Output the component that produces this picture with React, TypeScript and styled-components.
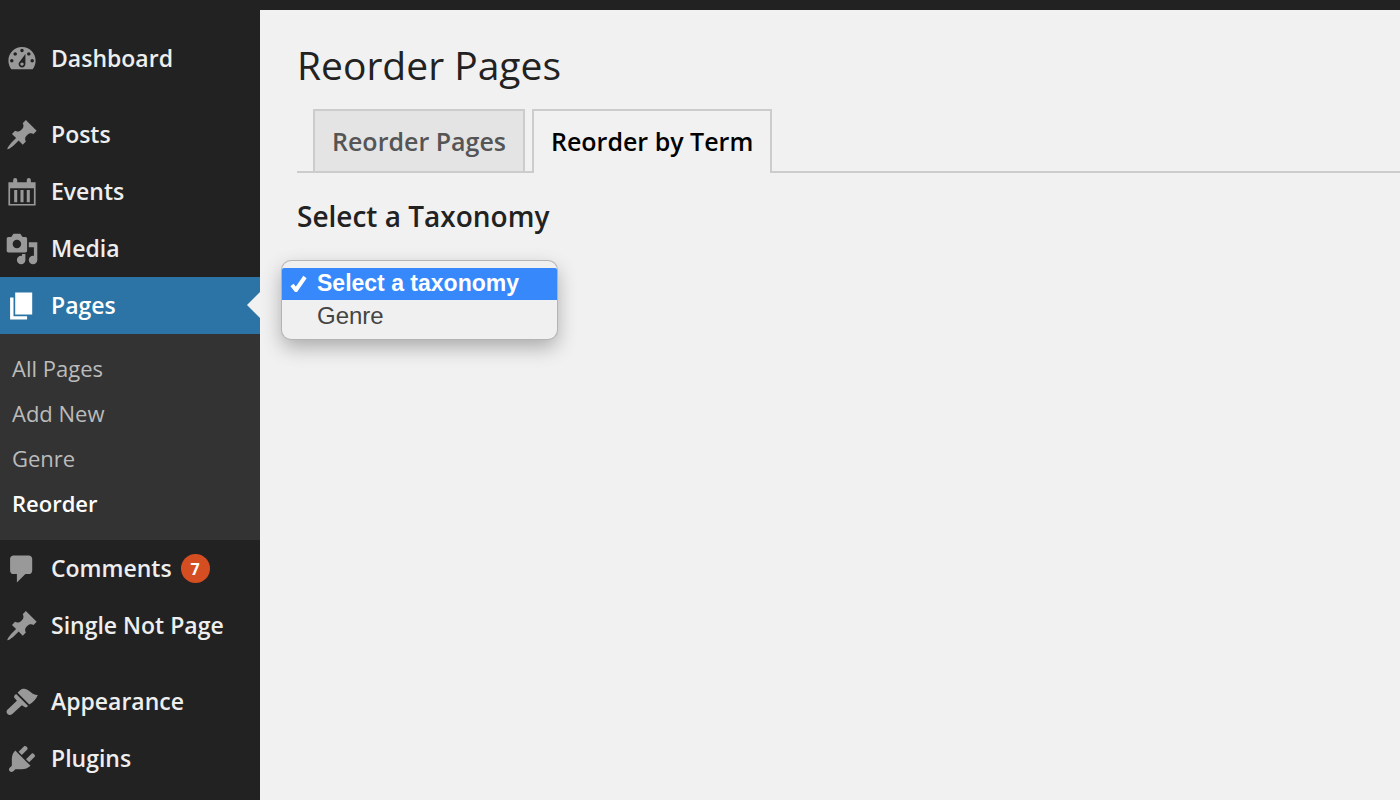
import React, { useState } from "react";
import styled, { createGlobalStyle } from "styled-components";

const GlobalStyle = createGlobalStyle`
  *, *::before, *::after { box-sizing: border-box; }
  html, body, #root { height: 100%; }
  body {
    margin: 0;
    overflow: hidden;
    background: #f1f1f1;
    color: #222;
    font-family: "Open Sans", "Noto Sans", sans-serif;
  }
  h1, h2, ul { margin: 0; padding: 0; }
`;

const Page = styled.div`
  display: flex;
  flex-direction: column;
  min-height: 100%;
`;

const AdminBar = styled.header`
  flex: none;
  height: 10px;
  background: #222;
`;

const Body = styled.div`
  display: flex;
  flex: 1;
`;

const Sidebar = styled.nav`
  flex: none;
  width: 260px;
  padding: 20px 0 12px;
  background: #222;
`;

const Menu = styled.ul`
  list-style: none;
  & + & { margin-top: 19px; }
`;

const MenuLink = styled.a<{ $current?: boolean }>`
  position: relative;
  display: flex;
  align-items: center;
  gap: 12px;
  height: 57px;
  padding-left: 5px;
  color: ${(p) => (p.$current ? "#fff" : "#eee")};
  background: ${(p) => (p.$current ? "#2b74a5" : "transparent")};
  font-size: 23px;
  font-weight: 600;
  text-decoration: none;
  white-space: nowrap;

  svg { flex: none; fill: ${(p) => (p.$current ? "#fff" : "#999")}; }

  &::after {
    content: "";
    display: ${(p) => (p.$current ? "block" : "none")};
    position: absolute;
    right: 0;
    top: 15px;
    border: 13px solid transparent;
    border-left: 0;
    border-right-color: #f1f1f1;
  }
`;

const MenuLabel = styled.span`
  padding-bottom: 2px;
`;

const Badge = styled.span`
  display: grid;
  place-items: center;
  width: 29px;
  height: 29px;
  margin-left: -3px;
  border-radius: 50%;
  background: #d54e21;
  color: #fff;
  font-size: 16px;
  font-weight: 700;
`;

const SubMenu = styled.ul`
  list-style: none;
  height: 206px;
  background: #333;
  && { padding-top: 12px; }
`;

const SubLink = styled.a<{ $current?: boolean }>`
  display: flex;
  align-items: center;
  height: 45px;
  padding: 0 0 2px 12px;
  color: ${(p) => (p.$current ? "#fff" : "#bbb")};
  font-size: 22px;
  font-weight: ${(p) => (p.$current ? 600 : 400)};
  text-decoration: none;
`;

const Main = styled.main`
  flex: 1;
  min-width: 0;
  padding: 31px 0 0 37px;
`;

const Title = styled.h1`
  font-size: 39px;
  font-weight: 400;
  line-height: 48px;
`;

const Tabs = styled.div`
  display: flex;
  gap: 7px;
  margin-top: 20px;
  padding-left: 16px;
  border-bottom: 2px solid #ccc;
`;

const Tab = styled.a<{ $current?: boolean }>`
  height: ${(p) => (p.$current ? 64 : 62)}px;
  margin-bottom: ${(p) => (p.$current ? -2 : 0)}px;
  padding: 0 17px;
  border: 2px solid #ccc;
  border-bottom: 0;
  background: ${(p) => (p.$current ? "#f1f1f1" : "#e4e4e4")};
  color: ${(p) => (p.$current ? "#000" : "#555")};
  font-size: 25px;
  font-weight: 600;
  line-height: 60px;
  text-decoration: none;
  white-space: nowrap;
`;

const SectionTitle = styled.h2`
  margin-top: 23px;
  font-size: 28px;
  font-weight: 600;
  line-height: 40px;
`;

const Popup = styled.div`
  position: relative;
  width: 275px;
  margin: 25px 0 0 -15px;
  padding: 7px 0;
  border-radius: 9px;
  background: #f0f0f0;
  box-shadow: 0 0 0 1px #b4b4b4, 0 8px 20px rgba(0, 0, 0, 0.3);
`;

const TaxonomySelect = styled.select`
  display: block;
  width: 100%;
  height: 64px;
  padding: 0;
  border: 0;
  outline: 0;
  overflow: hidden;
  background: transparent;
  font-family: "Liberation Sans", Arial, sans-serif;
  font-size: 24px;

  option {
    height: 32px;
    min-height: 32px;
    padding: 2px 0 0 35px;
    line-height: 30px;
    -webkit-text-fill-color: #444;
  }
  option:checked {
    background-image: linear-gradient(#3789fb, #3789fb);
    -webkit-text-fill-color: #fff;
    font-size: 23px;
    font-weight: 700;
  }
`;

const Check = styled.svg<{ $row: number }>`
  position: absolute;
  left: 8px;
  top: ${(p) => 14 + p.$row * 32}px;
  pointer-events: none;
`;

const icons: Record<string, string> = {
  dashboard:
    "M3.76 16h12.48c1.1-1.37 1.76-3.11 1.76-5 0-4.42-3.58-8-8-8s-8 3.58-8 8c0 1.89.66 3.63 1.76 5zM10 4c.55 0 1 .45 1 1s-.45 1-1 1-1-.45-1-1 .45-1 1-1zM6 6c.55 0 1 .45 1 1s-.45 1-1 1-1-.45-1-1 .45-1 1-1zm8 0c.55 0 1 .45 1 1s-.45 1-1 1-1-.45-1-1 .45-1 1-1zm-5.37 5.55L12 7v6c0 1.1-.9 2-2 2s-2-.9-2-2c0-.57.24-1.08.63-1.45zM4 10c.55 0 1 .45 1 1s-.45 1-1 1-1-.45-1-1 .45-1 1-1zm12 0c.55 0 1 .45 1 1s-.45 1-1 1-1-.45-1-1 .45-1 1-1zm-5 3c0-.55-.45-1-1-1s-1 .45-1 1 .45 1 1 1 1-.45 1-1z",
  pin: "M10.44 3.02l1.82-1.82 6.36 6.35-1.83 1.82c-1.05-.68-2.48-.57-3.41.36l-.75.75c-.92.93-1.04 2.35-.35 3.41l-1.83 1.82-2.41-2.41-2.8 2.79c-.42.42-3.38 2.71-3.8 2.29s1.86-3.39 2.28-3.81l2.79-2.79L4.1 9.36l1.83-1.82c1.05.69 2.48.57 3.4-.36l.75-.75c.93-.92 1.05-2.35.36-3.41z",
  events:
    "M2 4.2h2.8V3a1.2 1.2 0 0 1 2.4 0v1.2h5.6V3a1.2 1.2 0 0 1 2.4 0v1.2H18V18H2zM3 7.8V17h14V7.8zM5.4 8.8h1.8v7.2H5.4zM9.1 8.8h1.8v7.2H9.1zM12.8 8.8h1.8v7.2h-1.8z",
  media:
    "M13 11V4c0-.55-.45-1-1-1h-1.67L9 1H5L3.67 3H2c-.55 0-1 .45-1 1v7c0 .55.45 1 1 1h10c.55 0 1-.45 1-1zM7 4.5c1.38 0 2.5 1.12 2.5 2.5S8.38 9.5 7 9.5 4.5 8.38 4.5 7 5.62 4.5 7 4.5zM14 6h5v10.5c0 1.38-1.12 2.5-2.5 2.5S14 17.88 14 16.5s1.12-2.5 2.5-2.5c.17 0 .34.02.5.05V9h-3V6zm-4 8.05V13h2v3.5c0 1.38-1.12 2.5-2.5 2.5S7 17.88 7 16.5 8.12 14 9.5 14c.17 0 .34.02.5.05z",
  pages: "M6 15V2h10v13H6zm-1 1h8v2H3V5h2v11z",
  comments:
    "M5 2h9c1.1 0 2 .9 2 2v7c0 1.1-.9 2-2 2h-2l-5 5v-5H5c-1.1 0-2-.9-2-2V4c0-1.1.9-2 2-2z",
  appearance:
    "M7.4 4.6C8.6 3 9.8 2 11.2 2.2c2.4.2 4 2.4 5.2 2.9.9.5 1.9.7 2.9.8-1 2.5-2.8 4.3-5 5.5zM6.6 5.3l6.9 6.9c-.5.9-1.2 1.3-1.9.7L9.9 11.9 4.3 17.1c-1.9 1.6-4.5-.7-2.9-2.6L7 9.3 5.5 7.5c-.5-.8.2-1.7 1.1-2.2z",
  plugins:
    "M13.11 4.36L9.87 7.6 8 5.73l3.24-3.24c.35-.34 1.05-.2 1.56.32.52.51.66 1.21.31 1.55zm-8 1.77l.91-1.12 9.01 9.01-1.19.84c-.71.71-2.63 1.16-3.82 1.16H6.14L4.9 17.26c-.59.59-1.54.59-2.12 0-.59-.58-.59-1.53 0-2.12l1.24-1.24v-3.88c0-1.13.4-3.19 1.09-3.89zm7.26 3.97l3.24-3.24c.34-.35 1.04-.21 1.55.31.52.51.66 1.21.31 1.55l-3.24 3.25z",
};

type Entry = { label: string; icon: string; current?: boolean; count?: number; sub?: string[] };

const groups: Entry[][] = [
  [{ label: "Dashboard", icon: "dashboard" }],
  [
    { label: "Posts", icon: "pin" },
    { label: "Events", icon: "events" },
    { label: "Media", icon: "media" },
    { label: "Pages", icon: "pages", current: true, sub: ["All Pages", "Add New", "Genre", "Reorder"] },
    { label: "Comments", icon: "comments", count: 7 },
    { label: "Single Not Page", icon: "pin" },
  ],
  [
    { label: "Appearance", icon: "appearance" },
    { label: "Plugins", icon: "plugins" },
  ],
];

export default function App() {
  const [selected, setSelected] = useState(0);

  return (
    <Page>
      <GlobalStyle />
      <AdminBar />
      <Body>
        <Sidebar aria-label="Main menu">
          {groups.map((group, i) => (
            <Menu key={i}>
              {group.map((item) => (
                <li key={item.label}>
                  <MenuLink href="#" $current={item.current}>
                    <svg width="34" height="34" viewBox="0 0 20 20" aria-hidden="true">
                      <path fillRule="evenodd" d={icons[item.icon]} />
                    </svg>
                    <MenuLabel>{item.label}</MenuLabel>
                    {item.count && <Badge>{item.count}</Badge>}
                  </MenuLink>
                  {item.sub && (
                    <SubMenu>
                      {item.sub.map((name) => (
                        <li key={name}>
                          <SubLink href="#" $current={name === "Reorder"}>
                            {name}
                          </SubLink>
                        </li>
                      ))}
                    </SubMenu>
                  )}
                </li>
              ))}
            </Menu>
          ))}
        </Sidebar>
        <Main>
          <Title>Reorder Pages</Title>
          <Tabs>
            <Tab href="#">Reorder Pages</Tab>
            <Tab href="#" $current>
              Reorder by Term
            </Tab>
          </Tabs>
          <SectionTitle id="taxonomy-title">Select a Taxonomy</SectionTitle>
          <Popup>
            <TaxonomySelect
              size={2}
              aria-labelledby="taxonomy-title"
              value={selected}
              onChange={(e) => setSelected(Number(e.target.value))}
            >
              <option value={0}>Select a taxonomy</option>
              <option value={1}>Genre</option>
            </TaxonomySelect>
            <Check $row={selected} width="17" height="17" viewBox="0 0 17 17" aria-hidden="true">
              <path d="M2 10l4 5L15 2" fill="none" stroke="#fff" strokeWidth="4" />
            </Check>
          </Popup>
        </Main>
      </Body>
    </Page>
  );
}
